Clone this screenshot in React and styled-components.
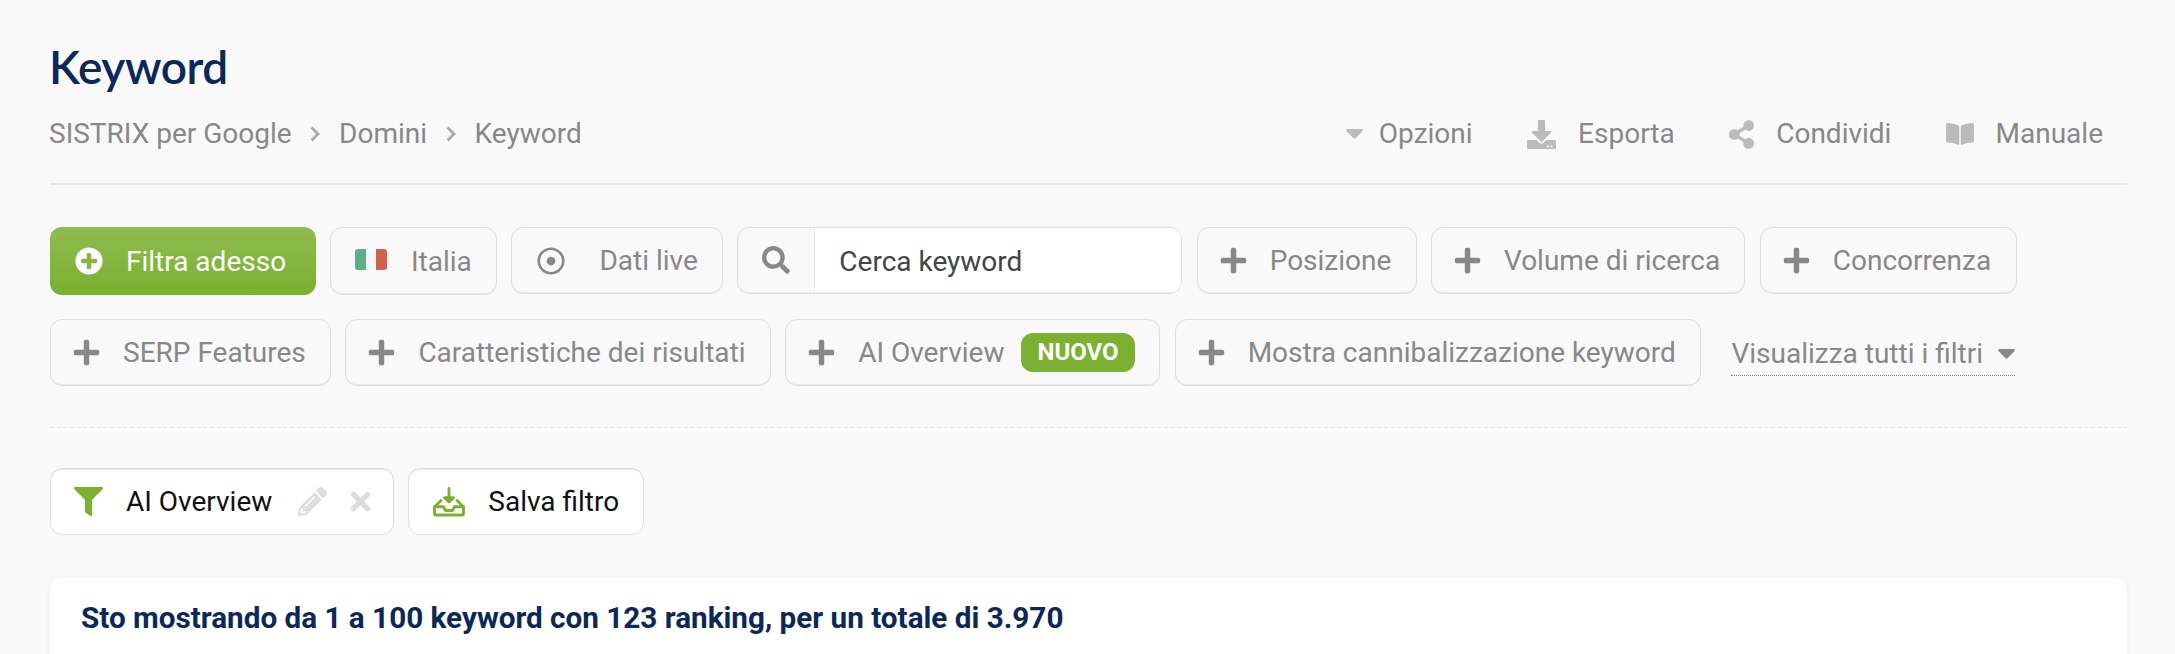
import React from 'react';
import styled, { createGlobalStyle } from 'styled-components';
import {
  FaShareAlt, FaBookOpen, FaPlusCircle, FaSearch, FaPlus, FaPencilAlt,
  FaTimes, FaFilter, FaDownload, FaRegDotCircle
} from 'react-icons/fa';

const Global = createGlobalStyle`
  * { box-sizing: border-box; }
  body {
    margin: 0;
    height: 654px;
    overflow: hidden;
    background-color: #f9f9f9;
    font-family: Roboto, "Liberation Sans", sans-serif;
    font-size: 28px;
    color: #888;
  }
  svg { flex: none; display: block; }
`
const Page = styled.div`
  width: 2077px;
  margin-left: 50px;
`
const Title = styled.h1`
  margin: 0 0 0 -1px;
  height: 106px;
  padding-top: 39px;
  font-family: Lato, sans-serif;
  font-size: 46px;
  line-height: 56px;
  font-weight: 600;
  letter-spacing: -0.4px;
  color: #0c2859;
`
const Header = styled.div`
  display: flex;
  justify-content: space-between;
  height: 79px;
  border-bottom: 2px solid #e7e7e7;
  line-height: 56px;
`
const Crumbs = styled.div`
  display: flex;
  align-items: center;
  height: 56px;
  margin-left: -1px;
`
const Crumb = styled.span`
  white-space: nowrap;
`
const Chevron = styled.svg`
  width: 10px;
  height: 16px;
  margin: 0 19px 0 18.5px;
`
const Actions = styled.div`
  display: flex;
  gap: 54.5px;
  height: 56px;
  padding-right: 24px;
`
const Action = styled.span`
  display: flex;
  align-items: center;
  gap: ${p => p.$gap || 21.6}px;

  svg {
    color: #bbb;
  }
`
const ShareIcon = styled(FaShareAlt)`
  width: 25px;
  height: 29px;
`
const Row = styled.div`
  display: flex;
  gap: ${p => p.$gap || 14.3}px;
  height: 67px;
  margin-top: ${p => p.$top}px;
`
const Button = styled.div`
  display: flex;
  align-items: center;
  gap: ${p => p.$gap || 23}px;
  height: ${p => p.$tall ? 68 : 67}px;
  padding: 0 24.3px 0 ${p => p.$left || 23}px;
  border: 1px solid #dedede;
  border-radius: 12px;
  box-shadow: inset 0 -1px 0 #e8e8e8;
  white-space: nowrap;
`
const Primary = styled(Button)`
  padding: 0 30px 0 24.5px;
  border: none;
  box-shadow: none;
  background: linear-gradient(#8fbc50, #7bb030);
  color: #fff;
`
const Chip = styled(Button)`
  background-color: #fff;
  box-shadow: inset 0 1px 0 #e8e8e8;
  color: #111;
  padding-right: ${p => p.$right || 24}px;
`
const FunnelIcon = styled(FaFilter)`
  color: #7bb030;
`
const ChipTool = styled.span`
  color: #ddd;
  margin-left: ${p => p.$left}px;
`
const Flag = styled.span`
  width: 32px;
  height: 21px;
  margin-bottom: 4px;
  border-radius: 3px;
  background: linear-gradient(90deg, #5bb085 11px, #f6f6f8 11px, #f6f6f8 21px, #d0614f 21px);
`
const Badge = styled.span`
  height: 39px;
  margin-left: -5.5px;
  padding: 0 16.5px;
  border-radius: 12px;
  background-color: #7bb030;
  color: #fff;
  font-size: 24px;
  line-height: 39px;
  font-weight: bold;
`
const Search = styled.div`
  display: flex;
  width: 445px;
  height: 67px;
  border: 1px solid #dedede;
  border-radius: 12px;
  box-shadow: inset 0 -1px 0 #e8e8e8;
  overflow: hidden;
`
const SearchIcon = styled.span`
  display: flex;
  align-items: center;
  width: 77px;
  padding: 0 0 2px 24px;
  border-right: 1px solid #ececec;
`
const SearchInput = styled.span`
  flex: 1;
  padding-left: 24px;
  border-bottom: 1px solid #e8e8e8;
  background-color: #fff;
  color: #444;
  line-height: 67px;
`
const AllFilters = styled.span`
  display: flex;
  align-items: center;
  gap: 15.5px;
  height: 44px;
  margin: 13px 0 0 16px;
  border-bottom: 1px dotted #888;
`
const Divider = styled.div`
  height: 4px;
  margin-top: 41px;
  border-bottom: 2px solid #fdfdfd;
  background: repeating-linear-gradient(90deg, #e0e0e0 0 4px, transparent 4px 6.67px) 0 0 / 100% 1px no-repeat;
`
const Card = styled.div`
  height: 100px;
  margin-top: 43px;
  padding: 20px 31px;
  border-radius: 12px;
  background-color: #fff;
  box-shadow: 0 2px 6px rgba(0, 0, 0, 0.06);
  color: #0c2859;
  font-size: 29.68px;
  line-height: 40px;
  font-weight: bold;
`

const Caret = () => (
  <svg width="17" height="10" viewBox="0 0 17 10" fill="currentColor">
    <path d="M1.5 0h14c1.2 0 1.8 1.3 1 2.1L9.5 9.2c-.6.6-1.4.6-2 0L.5 2.1C-.3 1.3.3 0 1.5 0z" />
  </svg>
)

const Separator = () => (
  <Chevron viewBox="0 0 10 16" fill="none" stroke="#aaa" strokeWidth="2.8">
    <path d="M1.5 1.5L8 8l-6.5 6.5" />
  </Chevron>
)

const SaveIcon = () => (
  <svg width="32" height="30" viewBox="0 0 32 30" fill="none" stroke="#7bb030" strokeWidth="2.9" strokeLinecap="round" strokeLinejoin="round">
    <path d="M16 1.5v9" />
    <path d="M11.5 10.8h9L16 15z" fill="#7bb030" />
    <path d="M8 13.5L1.5 20v6.5q0 1.5 1.5 1.5h26q1.5 0 1.5-1.5V20L24 13.5" />
    <path d="M2 19.8h8.5l2 3.7h7l2-3.7H30" />
  </svg>
)

const Filter = ({ children }) => (
  <Button $left={21} $gap={22}><FaPlus size={29} />{children}</Button>
)

const App = () => {
  return (
    <Page>
      <Global />
      <Title>Keyword</Title>
      <Header>
        <Crumbs>
          <Crumb>SISTRIX per Google</Crumb>
          <Separator />
          <Crumb>Domini</Crumb>
          <Separator />
          <Crumb>Keyword</Crumb>
        </Crumbs>
        <Actions>
          <Action $gap={16}><Caret />Opzioni</Action>
          <Action $gap={22}><FaDownload size={29} />Esporta</Action>
          <Action $gap={22}><ShareIcon />Condividi</Action>
          <Action><FaBookOpen size={28} />Manuale</Action>
        </Actions>
      </Header>
      <Row $top={42}>
        <Primary $tall $gap={23.5}><FaPlusCircle size={28} />Filtra adesso</Primary>
        <Button $tall $left={24} $gap={23.5}><Flag />Italia</Button>
        <Button $left={25} $gap={34}><FaRegDotCircle size={28} />Dati live</Button>
        <Search>
          <SearchIcon><FaSearch size={28} /></SearchIcon>
          <SearchInput>Cerca keyword</SearchInput>
        </Search>
        <Filter>Posizione</Filter>
        <Filter>Volume di ricerca</Filter>
        <Filter>Concorrenza</Filter>
      </Row>
      <Row $top={25}>
        <Filter>SERP Features</Filter>
        <Filter>Caratteristiche dei risultati</Filter>
        <Filter>AI Overview<Badge>NUOVO</Badge></Filter>
        <Filter>Mostra cannibalizzazione keyword</Filter>
        <AllFilters>Visualizza tutti i filtri <Caret /></AllFilters>
      </Row>
      <Divider />
      <Row $top={37} $gap={14}>
        <Chip $right={17.5}>
          <FunnelIcon size={29} />
          AI Overview
          <ChipTool $left={3}><FaPencilAlt size={29} /></ChipTool>
          <ChipTool $left={-4}><FaTimes size={29} /></ChipTool>
        </Chip>
        <Chip $left={24} $gap={23.5}><SaveIcon />Salva filtro</Chip>
      </Row>
      <Card>Sto mostrando da 1 a 100 keyword con 123 ranking, per un totale di 3.970</Card>
    </Page>
  )
}

export default App;
